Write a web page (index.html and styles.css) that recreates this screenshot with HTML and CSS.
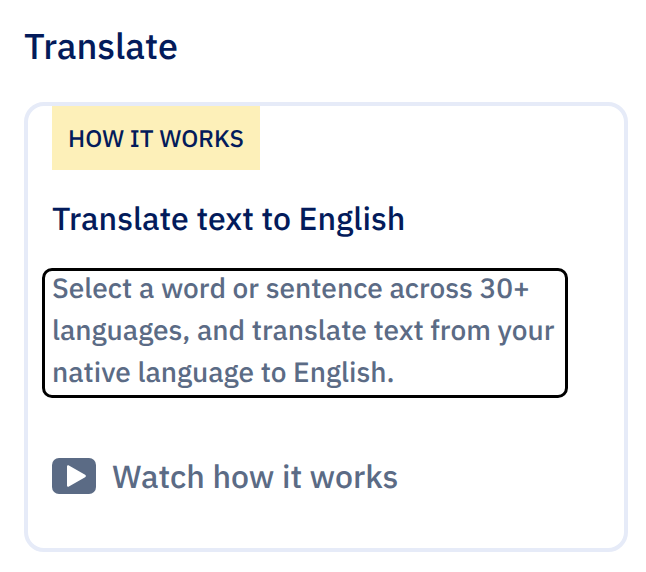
FILE: index.html
```html
<!DOCTYPE html>
<html lang="en">
<head>
<meta charset="utf-8">
<title>Translate</title>
<link rel="stylesheet" href="styles.css">
</head>
<body>
<h1 class="title">Translate</h1>
<section class="card">
  <div class="tag">HOW IT WORKS</div>
  <h2 class="heading">Translate text to English</h2>
  <div class="desc"><p class="desc-text">Select a word or sentence across 30+ languages, and translate text from your native language to English.</p></div>
  <a class="watch" href="#">
    <svg class="play" width="44" height="36" viewBox="0 0 44 36"><rect width="44" height="36" rx="7" fill="#5b6b85"/><path d="M15 8.500c0-1 1-1.600 1.900-1.100l16.200 9.300c1 .6 1 2 0 2.600l-16.200 9.300c-.9.500-1.900-.1-1.900-1.100z" fill="#fff"/></svg>
    <span>Watch how it works</span>
  </a>
</section>
</body>
</html>
```
FILE: styles.css
```css
html, body { margin: 0; padding: 0; background: #fff; }
body { width: 646px; height: 572px; overflow: hidden; padding: 22px 18px 0 24px; box-sizing: border-box; font-family: "IBM Plex Sans", "Noto Sans", sans-serif; text-rendering: geometricPrecision; }
.title { margin: 0 0 32px; font-size: 36px; line-height: 48px; font-weight: 500; color: #031b5b; }
.card { box-sizing: border-box; width: 604px; height: 450px; border: 4px solid #e6ebf8; border-radius: 20px; padding: 0 24px; }
.tag { width: fit-content; background: #fdf0b9; color: #031b5b; font-size: 24px; font-weight: 500; line-height: 64px; padding: 0 16px; }
.heading { margin: 27px 0 29px; font-size: 32px; line-height: 42px; font-weight: 500; color: #031b5b; }
.desc { margin-left: -10px; width: 526px; height: 130px; padding: 0 7px; box-sizing: border-box; border: 3px solid #000; border-radius: 10px; }
.desc-text { margin: -4px 0 0; font-size: 28px; font-weight: 500; line-height: 42px; color: #5b6b85; }
.watch { display: flex; align-items: center; gap: 16px; margin-top: 57px; color: #5b6b85; font-size: 32px; font-weight: 500; text-decoration: none; }
```
